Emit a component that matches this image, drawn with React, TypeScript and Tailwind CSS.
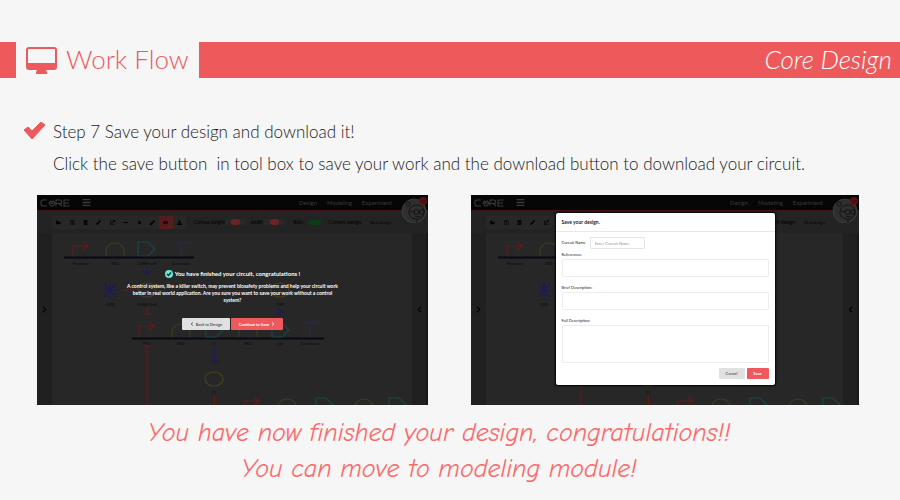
import React from "react";
import {
  FaFolderOpen,
  FaRegSave,
  FaTrashAlt,
  FaPencilAlt,
  FaExternalLinkAlt,
  FaMinus,
  FaTimes,
  FaPen,
  FaEye,
  FaDownload,
  FaBars,
  FaChevronLeft,
  FaChevronRight,
} from "react-icons/fa";

const tools = [
  { name: "Open", Icon: FaFolderOpen },
  { name: "Save", Icon: FaRegSave },
  { name: "Delete", Icon: FaTrashAlt },
  { name: "Edit", Icon: FaPencilAlt },
  { name: "Export", Icon: FaExternalLinkAlt },
  { name: "Line", Icon: FaMinus },
  { name: "Remove", Icon: FaTimes },
  { name: "Draw", Icon: FaPen },
  { name: "Preview", Icon: FaEye },
  { name: "Download", Icon: FaDownload },
];

const red = "#651a1c";
const blue = "#1c1b55";
const teal = "#1b4649";
const olive = "#3d3d20";
const brown = "#493f1d";

function Promoter({ x, y }: { x: number; y: number }) {
  return <path d={`M${x} ${y + 11}V${y}h15m-5-4l5 4-5 4`} stroke={red} />;
}

function Arc({ x, y }: { x: number; y: number }) {
  return <path d={`M${x - 9} ${y + 13}v-5a9 8 0 0 1 18 0v5`} stroke={olive} />;
}

function Gene({ x, y }: { x: number; y: number }) {
  return <path d={`M${x} ${y}h10l7 7-7 7h-10z`} stroke={teal} />;
}

function Stop({ x, y }: { x: number; y: number }) {
  return <path d={`M${x - 8} ${y}h17M${x} ${y}v14`} stroke="#2b2a4a" />;
}

function Label({ x, y, children }: { x: number; y: number; children: string }) {
  return (
    <text x={x} y={y} textAnchor="middle" fill="#080808" stroke="none" className="text-[4px]">
      {children}
    </text>
  );
}

function Circuit() {
  return (
    <svg viewBox="15 38 360 172" className="block h-full w-full bg-[#272727]" preserveAspectRatio="xMinYMin slice" fill="none" strokeWidth="1.2">
      <Promoter x={36} y={51} />
      <Arc x={78} y={48} />
      <Gene x={101} y={47} />
      <Stop x={144} y={48} />
      <path d="M27 62.5H157M95 143.5H287" stroke="#080b14" strokeWidth="2" />
      <Label x={44} y={70}>Promoter</Label>
      <Label x={78} y={70}>RBS</Label>
      <Label x={110} y={70}>UVR8-tetR</Label>
      <Label x={144} y={70}>Terminator</Label>
      <path d="M110 71v8m-4-4l4 4 4-4M73 86v18M64 95h18M67 88l12 14M79 88l-12 14M243 122v-8m-4 4l4-4 4 4M177.500 151v17m-4-4l4 4 4-4" stroke={blue} />
      <path d="M86 95h14M110 113v6m-4 0h8M106 151h8m-4 0v60M177.500 201v10" stroke={red} />
      <ellipse cx="110" cy="95" rx="9" ry="7" stroke={brown} />
      <ellipse cx="243" cy="95" rx="9" ry="7" stroke={brown} />
      <ellipse cx="177" cy="184" rx="9" ry="7" stroke={brown} />
      <Label x={73} y={111}>UVB</Label>
      <Label x={110} y={111}>UVR8-TetR</Label>
      <Label x={243} y={111}>YFP</Label>
      <Promoter x={102} y={131} />
      <Arc x={144} y={129} />
      <Gene x={169} y={128} />
      <Arc x={211} y={129} />
      <Gene x={235} y={128} />
      <Stop x={273} y={128} />
      <Label x={110} y={150}>PTet</Label>
      <Label x={144} y={150}>RBS</Label>
      <Label x={177} y={150}>cI</Label>
      <Label x={211} y={150}>RBS</Label>
      <Label x={243} y={150}>yfp</Label>
      <Label x={273} y={150}>Terminator</Label>
      <Label x={177} y={199}>CI</Label>
      <Promoter x={207} y={206} />
      <Arc x={250} y={204} />
      <Gene x={279} y={203} />
      <Arc x={327} y={204} />
      <Gene x={352} y={203} />
    </svg>
  );
}

function Logo() {
  return (
    <svg viewBox="0 0 30 8" className="h-2 w-[30px]" fill="none" stroke="#3a3a3a" strokeWidth="1.1" role="img" aria-label="CORE">
      <path d="M7 1H3a2 2 0 0 0-2 2v2a2 2 0 0 0 2 2h4M11 1.500l-2 2.500 2 3h2l2-3-2-2.500M16 7V1h4a1.600 1.600 0 0 1 0 3.500h-4M19 4.500l3 2.500M29.500 1H24v6h5.500M24 4h5" />
      <circle cx="12" cy="3.500" r="1.200" />
    </svg>
  );
}

function Avatar() {
  return (
    <svg viewBox="0 0 28 28" className="absolute top-0 right-0 h-7 w-7" fill="none" aria-hidden="true">
      <circle cx="14" cy="16" r="12" fill="#2f2f2f" stroke="#3c3c3c" />
      <g stroke="#0c0c0c" strokeWidth="0.800">
        <path d="M9 18c0-6 4-8 8-8s7 3 7 7-3 7-7 7-8-2-8-6zM10 16l4 1M20 17h-1M15 21c2 1 4 1 5 0M17 24v4" />
        <circle cx="16.500" cy="17" r="2.500" />
        <circle cx="22" cy="17" r="2.300" />
        <circle cx="8" cy="9" r="2.200" />
      </g>
      <circle cx="23" cy="6" r="4" fill="#5a1113" />
      <text x="23" y="8" fontSize="4" textAnchor="middle" fill="#170404">17</text>
    </svg>
  );
}

function Knob() {
  return (
    <span className="flex w-[22px] justify-center rounded-full bg-[#282828]">
      <span className="h-[6px] w-[9px] rounded-full bg-[#6d2224]" />
    </span>
  );
}

function Workspace({ children }: { children: React.ReactNode }) {
  return (
    <section className="relative flex h-[210px] min-w-0 flex-col overflow-hidden bg-[#232323] text-black">
      <header className="flex h-4 shrink-0 items-center border-b border-[#431416] bg-[#060606] pr-9 pl-[3px] text-[#393939]">
        <Logo />
        <FaBars className="ml-3 text-[9px]" />
        <nav className="ml-auto flex gap-[10px] text-[6px] leading-[8px]">
          <a href="#design">Design</a>
          <a href="#modeling">Modeling</a>
          <a href="#experiment">Experiment</a>
        </nav>
      </header>
      <Avatar />
      <div className="flex h-[22px] shrink-0 items-center pl-[15px] text-[5px] leading-[7px]">
        <div className="flex w-[134px] bg-[#272727]">
          {tools.map(({ name, Icon }) => (
            <button
              key={name}
              aria-label={name}
              className={`flex h-[13px] flex-1 items-center justify-center text-[5px] ${name === "Preview" ? "bg-[#571c1e]" : ""}`}
            >
              <Icon />
            </button>
          ))}
        </div>
        <span className="ml-2">Canvas height</span>
        <Knob />
        <span className="ml-1">width</span>
        <Knob />
        <span className="ml-2">Risk:</span>
        <span className="ml-1 h-[5px] w-[13px] rounded-sm bg-[#0d3d16]" />
        <span className="ml-2">Current design:</span>
        <span className="ml-2 text-[4px]">New design</span>
      </div>
      <div className="flex min-h-0 flex-1">
        <aside className="flex w-[15px] shrink-0 justify-center bg-[#202020] pt-[73px] text-[7px]">
          <FaChevronRight />
        </aside>
        <div className="min-w-0 flex-1">
          <Circuit />
        </div>
        <aside className="flex w-4 shrink-0 justify-center border-r-2 border-[#191919] bg-[#202020] pt-[73px] text-[7px]">
          <FaChevronLeft />
        </aside>
      </div>
      <div className="absolute inset-0 flex flex-col items-center">{children}</div>
    </section>
  );
}

function Area({ id, label, box, gap }: { id: string; label: string; box: string; gap: string }) {
  return (
    <div className={`flex flex-col ${gap}`}>
      <label htmlFor={id} className="mb-px">{label}</label>
      <textarea id={id} className={`block w-full resize-none rounded-[1px] border border-[#ececec] ${box}`} />
    </div>
  );
}

export default function App() {
  return (
    <main className="min-h-[500px] overflow-hidden bg-[#f6f6f6] pt-[42px] font-['Lato',sans-serif]">
      <header className="flex h-9 items-center justify-between bg-[#ee5a5c] pr-2 pl-4">
        <h1 className="flex h-9 items-center gap-[9px] bg-[#f6f6f6] pr-[10px] pl-[10px] text-[26px] leading-[34px] text-[#ed595c]">
          <svg viewBox="0 0 31 27" className="h-[27px] w-[31px]" aria-hidden="true">
            <path fillRule="evenodd" fill="currentColor" d="M3 0h25a3 3 0 0 1 3 3v17a3 3 0 0 1-3 3h-8l1 2v2H10v-2l1-2H3a3 3 0 0 1-3-3V3a3 3 0 0 1 3-3zM3 2a1 1 0 0 0-1 1v13h27V3a1 1 0 0 0-1-1z" />
          </svg>
          <span className="pb-[2px] font-light">Work Flow</span>
        </h1>
        <p className="pb-[2px] text-[26px] leading-[34px] font-light text-white italic">Core Design</p>
      </header>

      <div className="flex gap-2 pt-[38px] pl-6 text-[17px] leading-8 text-[#1a1a1a]">
        <svg viewBox="0 0 21 17" className="mt-[6px] h-[17px] w-[21px] shrink-0" aria-hidden="true">
          <path fill="#ed595c" d="M0 8l4-3 4 4 9-9 4 3L8 17z" stroke="#ed595c" strokeLinejoin="round" />
        </svg>
        <div className="font-light">
          <h2>Step 7 Save your design and download it!</h2>
          <p className="whitespace-pre-wrap">{"Click the save button  in tool box to save your work and the download button to download your circuit."}</p>
        </div>
      </div>

      <div className="grid grid-cols-[391fr_388fr] gap-[43px] pt-[15px] pr-[41px] pl-[37px]">
        <Workspace>
          <div className="flex w-[218px] flex-col items-center pt-[75px] text-center text-[5px] leading-[7px] font-bold text-white">
            <h3 className="flex items-center gap-[2px] text-[6px] leading-[8px]">
              <svg viewBox="0 0 8 8" className="h-2 w-2" fill="none" aria-hidden="true">
                <circle cx="4" cy="4" r="4" fill="#68e5d5" />
                <path d="M2 4l1.500 1.500L6 2.500" stroke="#132a28" strokeWidth="1.200" />
              </svg>
              You have finished your circuit, congratulations !
            </h3>
            <p className="mt-[5px]">
              A control system, like a killer switch, may prevent biosafety problems and help your circuit work better in real world application. Are you sure you want to save your work without a control system?
            </p>
            <div className="mt-[14px] flex gap-px text-[4px]">
              <button className="flex h-3 w-12 items-center justify-center gap-[2px] rounded-[1px] bg-[#e0e1e2] text-[#555]">
                <FaChevronLeft /> Back to Design
              </button>
              <button className="flex h-3 w-[52px] items-center justify-center gap-[2px] rounded-[1px] bg-[#ed595c]">
                Continue to Save <FaChevronRight />
              </button>
            </div>
          </div>
        </Workspace>
        <Workspace>
          <form className="mt-[18px] flex h-[172px] w-[219px] flex-col rounded-[2px] bg-white text-[4px] leading-[6px] text-[#222] shadow-[0_0_2px_1px_#050505]">
            <h3 className="border-b border-[#e8e8e8] px-[6px] pt-[6px] pb-[5px] text-[5px] leading-[7px] font-bold">Save your design.</h3>
            <div className="px-[6px] pt-[5px]">
              <div className="flex items-center gap-1">
                <label htmlFor="circuit-name">Curcuit Name</label>
                <input id="circuit-name" placeholder="Enter Curcuit Name" className="h-3 w-[55px] rounded-[1px] border border-[#e5e5e5] px-1 placeholder:text-[#999]" />
              </div>
              <Area id="references" label="References:" box="h-[18px]" gap="mt-[3px]" />
              <Area id="brief" label="Brief Description:" box="h-[18px]" gap="mt-2" />
              <Area id="full" label="Full Description:" box="h-[38px]" gap="mt-2" />
              <div className="mt-[5px] flex justify-end gap-[2px] font-bold">
                <button type="button" className="h-[11px] w-[26px] rounded-[1px] bg-[#e0e1e2] text-[#666]">Cancel</button>
                <button type="button" className="h-[11px] w-[22px] rounded-[1px] bg-[#ed595c] text-white">Save</button>
              </div>
            </div>
          </form>
        </Workspace>
      </div>

      <p className="pt-[10px] pr-[22px] text-center font-['Comic_Neue','Lato',cursive] text-[26px] leading-9 text-[#ff6868] italic">
        You have now finished your design, congratulations!!
        <br />
        You can move to modeling module!
      </p>
    </main>
  );
}
